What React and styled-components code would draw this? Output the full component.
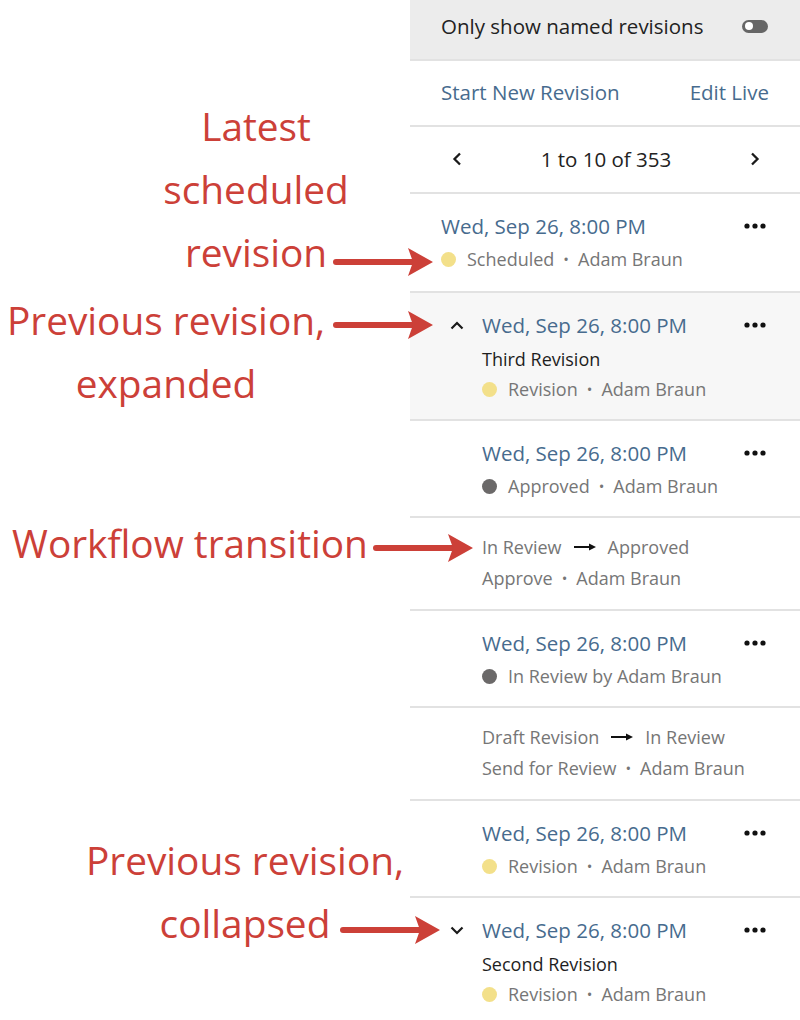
import React from "react";
import styled, { createGlobalStyle } from "styled-components";

const GlobalStyle = createGlobalStyle`
  html, body {
    margin: 0;
    padding: 0;
    background: #fff;
  }
  body {
    font-family: "Open Sans", "Noto Sans", sans-serif;
    overflow: hidden;
  }
`;

const Page = styled.div`
  display: flex;
  width: 800px;
  height: 1020px;
  overflow: hidden;
`;

const Notes = styled.div`
  position: relative;
  flex: 0 0 410px;
  height: 100%;
`;

const Callout = styled.div`
  position: absolute;
  top: ${p => p.$top}px;
  left: ${p => p.$center - 220}px;
  width: 440px;
  text-align: center;
  color: #cc4038;
  font-size: 38.8px;
  line-height: 63px;
  white-space: nowrap;
`;

const ArrowSvg = styled.svg`
  position: absolute;
  top: ${p => p.$y - 15}px;
  left: ${p => p.$x}px;
  overflow: visible;
`;

const Arrow = ({ x, y }) => (
  <ArrowSvg $x={x} $y={y} width="100" height="30" viewBox="0 0 100 30">
    <line x1="3" y1="15" x2="82" y2="15" stroke="#cc4038" strokeWidth="6" strokeLinecap="round" />
    <path d="M75 1 L100 15 L75 29 L80 15 Z" fill="#cc4038" />
  </ArrowSvg>
);

const Panel = styled.div`
  flex: 1;
  min-width: 0;
  display: flex;
  flex-direction: column;
  color: #222;
`;

const Bar = styled.div`
  flex-shrink: 0;
  display: flex;
  align-items: center;
  justify-content: space-between;
  height: ${p => p.$h}px;
  padding: 0 31px ${p => p.$lift || 0}px 31px;
  background: ${p => (p.$gray ? "#ececec" : "#fff")};
  border-bottom: 2px solid #e2e2e2;
  box-sizing: border-box;
  font-size: 20.5px;
`;

const Toggle = styled.span`
  position: relative;
  width: 26px;
  height: 13px;
  margin-right: 1px;
  border-radius: 7px;
  background: #666;
  &::after {
    content: "";
    position: absolute;
    left: 3px;
    top: 2.5px;
    width: 8px;
    height: 8px;
    border-radius: 50%;
    background: #fff;
  }
`;

const Link = styled.span`
  color: #476b8e;
`;

const Pager = styled(Bar)`
  padding: 0 40px 2px 42px;
`;

const Row = styled.div`
  flex-shrink: 0;
  display: grid;
  grid-template-columns: ${p => (p.$indent ? "72px" : "31px")} minmax(0, 1fr) 56px;
  padding: ${p => (p.$transition ? "16px 0 18px" : `18px 0 ${p.$first ? 19 : 17}px`)};
  background: ${p => (p.$active ? "#f7f7f7" : "#fff")};
  border-bottom: 2px solid #e2e2e2;
`;

const Gutter = styled.div`
  display: flex;
  justify-content: flex-end;
  padding-right: 18px;
  height: 28px;
  align-items: center;
`;

const Body = styled.div`
  display: flex;
  flex-direction: column;
  white-space: nowrap;
`;

const Date = styled.div`
  color: #476b8e;
  font-size: 20.5px;
  line-height: 28px;
`;

const Title = styled.div`
  margin-top: 6px;
  font-size: 18px;
  line-height: 28px;
  color: #1e1e1e;
`;

const Meta = styled.div`
  display: flex;
  align-items: center;
  margin-top: ${p => p.$gap ?? 6}px;
  font-size: 18px;
  line-height: 26px;
  color: #767676;
`;

const Dot = styled.span`
  flex-shrink: 0;
  width: 15px;
  height: 15px;
  border-radius: 50%;
  margin-right: 11px;
  background: ${p => p.$color};
`;

const Sep = styled.span`
  margin: 0 9px;
  font-size: 15px;
`;

const More = styled.div`
  display: flex;
  align-items: center;
  height: 28px;
`;

const Chevron = ({ up }) => (
  <svg width="14" height="9" viewBox="0 0 14 9">
    <polyline
      points={up ? "1.5,7.5 7,2 12.5,7.5" : "1.5,1.5 7,7 12.5,1.5"}
      fill="none"
      stroke="#1a1a1a"
      strokeWidth="2.2"
    />
  </svg>
);

const PageArrow = ({ right }) => (
  <svg width="10" height="14" viewBox="0 0 10 14">
    <polyline
      points={right ? "2,1.5 7.5,7 2,12.5" : "8,1.5 2.5,7 8,12.5"}
      fill="none"
      stroke="#1a1a1a"
      strokeWidth="2.3"
    />
  </svg>
);

const Dots = () => (
  <svg width="22" height="6" viewBox="0 0 22 6">
    <circle cx="3" cy="3" r="2.6" fill="#111" />
    <circle cx="11" cy="3" r="2.6" fill="#111" />
    <circle cx="19" cy="3" r="2.6" fill="#111" />
  </svg>
);

const ArrowGlyph = styled.span`
  margin: 0 12px;
  color: #111;
  display: inline-flex;
`;

const Flow = () => (
  <ArrowGlyph>
    <svg width="22" height="8" viewBox="0 0 22 8">
      <line x1="0" y1="4" x2="17" y2="4" stroke="#111" strokeWidth="2" />
      <path d="M15 0.5 L22 4 L15 7.5 Z" fill="#111" />
    </svg>
  </ArrowGlyph>
);

const YELLOW = "#f3e08a";
const GRAY = "#6b6969";

const Revision = ({ first, indent, chevron, active, title, dot, children }) => (
  <Row $first={first} $indent={indent} $active={active}>
    <Gutter>{chevron && <Chevron up={chevron === "up"} />}</Gutter>
    <Body>
      <Date>Wed, Sep 26, 8:00 PM</Date>
      {title && <Title>{title}</Title>}
      <Meta $gap={title ? 3 : 6}>
        <Dot $color={dot} />
        {children}
      </Meta>
    </Body>
    <More>
      <Dots />
    </More>
  </Row>
);

const Transition = ({ from, to, action }) => (
  <Row $indent $transition>
    <div />
    <Body>
      <Meta $gap={0}>
        {from}
        <Flow />
        {to}
      </Meta>
      <Meta $gap={5}>
        {action}
        <Sep>•</Sep>Adam Braun
      </Meta>
    </Body>
    <div />
  </Row>
);

export default function App() {
  return (
    <>
      <GlobalStyle />
      <Page>
        <Notes>
          <Callout $top={95} $center={256}>
            Latest
            <br />
            scheduled
            <br />
            revision
          </Callout>
          <Callout $top={289} $center={166}>
            Previous revision,
            <br />
            expanded
          </Callout>
          <Callout $top={512} $center={190}>
            Workflow transition
          </Callout>
          <Callout $top={829} $center={245}>
            Previous revision,
            <br />
            collapsed
          </Callout>
          <Arrow x={333} y={262} />
          <Arrow x={333} y={325} />
          <Arrow x={373} y={548} />
          <Arrow x={340} y={930} />
        </Notes>
        <Panel>
          <Bar $gray $h={61} $lift={7}>
            <span>Only show named revisions</span>
            <Toggle />
          </Bar>
          <Bar $h={66} $lift={3}>
            <Link>Start New Revision</Link>
            <Link>Edit Live</Link>
          </Bar>
          <Pager $h={67}>
            <PageArrow />
            <span>1 to 10 of 353</span>
            <PageArrow right />
          </Pager>
          <Revision first dot={YELLOW}>
            Scheduled<Sep>•</Sep>Adam Braun
          </Revision>
          <Revision indent active chevron="up" title="Third Revision" dot={YELLOW}>
            Revision<Sep>•</Sep>Adam Braun
          </Revision>
          <Revision indent dot={GRAY}>
            Approved<Sep>•</Sep>Adam Braun
          </Revision>
          <Transition from="In Review" to="Approved" action="Approve" />
          <Revision indent dot={GRAY}>
            In Review by Adam Braun
          </Revision>
          <Transition from="Draft Revision" to="In Review" action="Send for Review" />
          <Revision indent dot={YELLOW}>
            Revision<Sep>•</Sep>Adam Braun
          </Revision>
          <Revision indent chevron="down" title="Second Revision" dot={YELLOW}>
            Revision<Sep>•</Sep>Adam Braun
          </Revision>
        </Panel>
      </Page>
    </>
  );
}
